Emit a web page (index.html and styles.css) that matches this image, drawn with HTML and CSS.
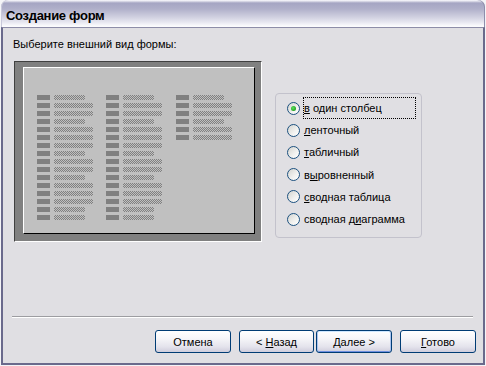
FILE: index.html
```html
<!DOCTYPE html>
<html lang="ru">
<head>
    <meta charset="UTF-8">
    <title>Создание форм</title>
    <link rel="stylesheet" href="styles.css">
</head>
<body>
    <div class="window">
        <div class="titlebar">Создание форм</div>
        <div class="client">
            <div class="prompt">Выберите внешний вид формы:</div>

            <div class="main">
                <div class="preview">
                    <div class="sheet">
                        <div class="col">
                            <div class="ln"><i></i><b class="s"></b></div>
                            <div class="ln"><i></i><b></b></div>
                            <div class="ln"><i></i><b></b></div>
                            <div class="ln"><i></i><b class="s"></b></div>
                            <div class="ln"><i></i><b></b></div>
                            <div class="ln"><i></i><b></b></div>
                            <div class="ln"><i></i><b></b></div>
                            <div class="ln"><i></i><b class="s"></b></div>
                            <div class="ln"><i></i><b></b></div>
                            <div class="ln"><i></i><b></b></div>
                            <div class="ln"><i></i><b class="s"></b></div>
                            <div class="ln"><i></i><b></b></div>
                            <div class="ln"><i></i><b></b></div>
                            <div class="ln"><i></i><b></b></div>
                            <div class="ln"><i></i><b class="s"></b></div>
                            <div class="ln"><i></i><b class="s"></b></div>
                        </div>
                        <div class="col">
                            <div class="ln"><i></i><b class="s"></b></div>
                            <div class="ln"><i></i><b></b></div>
                            <div class="ln"><i></i><b></b></div>
                            <div class="ln"><i></i><b class="s"></b></div>
                            <div class="ln"><i></i><b></b></div>
                            <div class="ln"><i></i><b></b></div>
                            <div class="ln"><i></i><b></b></div>
                            <div class="ln"><i></i><b class="s"></b></div>
                            <div class="ln"><i></i><b></b></div>
                            <div class="ln"><i></i><b></b></div>
                            <div class="ln"><i></i><b class="s"></b></div>
                            <div class="ln"><i></i><b></b></div>
                            <div class="ln"><i></i><b></b></div>
                            <div class="ln"><i></i><b></b></div>
                            <div class="ln"><i></i><b class="s"></b></div>
                            <div class="ln"><i></i><b class="s"></b></div>
                        </div>
                        <div class="col">
                            <div class="ln"><i></i><b class="s"></b></div>
                            <div class="ln"><i></i><b></b></div>
                            <div class="ln"><i></i><b></b></div>
                            <div class="ln"><i></i><b class="s"></b></div>
                            <div class="ln"><i></i><b></b></div>
                            <div class="ln"><i></i><b></b></div>
                        </div>
                    </div>
                </div>

                <div class="group">
                    <label class="opt">
                        <span class="radio checked"></span>
                        <span class="text focus"><u>в</u> один столбец</span>
                    </label>
                    <label class="opt">
                        <span class="radio"></span>
                        <span class="text"><u>л</u>енточный</span>
                    </label>
                    <label class="opt">
                        <span class="radio"></span>
                        <span class="text"><u>т</u>абличный</span>
                    </label>
                    <label class="opt">
                        <span class="radio"></span>
                        <span class="text">в<u>ы</u>ровненный</span>
                    </label>
                    <label class="opt">
                        <span class="radio"></span>
                        <span class="text"><u>с</u>водная таблица</span>
                    </label>
                    <label class="opt">
                        <span class="radio"></span>
                        <span class="text">сводная д<u>и</u>аграмма</span>
                    </label>
                </div>
            </div>

            <div class="sep"></div>

            <div class="buttons">
                <button class="btn">Отмена</button>
                <button class="btn back">&lt; <u>Н</u>азад</button>
                <button class="btn next default"><u>Д</u>алее &gt;</button>
                <button class="btn finish"><u>Г</u>отово</button>
            </div>
        </div>
    </div>
</body>
</html>
```

FILE: styles.css
```css
body {
    margin: 0;
    background: #f4f4f7;
    font-family: "Liberation Sans", Arial, sans-serif;
    font-size: 11px;
    color: #000;
}
.window {
    width: 484px;
    margin-left: 1px;
}
.titlebar {
    height: 22px;
    padding: 5px 0 0 5px;
    line-height: 22px;
    font-size: 13px;
    font-weight: bold;
    letter-spacing: -0.3px;
    border-radius: 7px 7px 0 0;
    box-shadow: inset 1px 0 #c8c8da, inset -1px 0 #8e8eac;
    background: linear-gradient(to bottom, #fbfbff 0, #e4e4ee 1px, #a5a5c3 3px, #b0b0ca 9px, #d0d0e0 17px, #ebebf3 23px, #fbfbfd 26px);
}
.client {
    height: 335px;
    background: #e0dfe3;
    border: 2px solid #6a6a8c;
    border-top: 1px solid #8d8da8;
}
.prompt {
    margin: 10px 0 0 10px;
    line-height: 13px;
}
.main {
    display: flex;
    align-items: flex-start;
    margin-top: 10px;
}
.preview {
    display: flex;
    box-sizing: border-box;
    width: 248px;
    height: 181px;
    margin-left: 11px;
    padding: 5px 6px 7px 8px;
    background: #808080;
    border: 1px solid;
    border-color: #404040 #fff #fff #404040;
}
.sheet {
    flex: 1;
    display: grid;
    grid-template-columns: 69px 70px 1fr;
    align-items: start;
    padding: 27px 0 0 13px;
    background: #c0c0c0;
    border: 1px solid;
    border-color: #fff #000 #000 #fff;
}
.col {
    display: flex;
    flex-direction: column;
    gap: 3px;
}
.ln {
    display: flex;
    gap: 4px;
    height: 5px;
}
.ln i {
    width: 13px;
    background: #808080;
}
.ln b {
    width: 39px;
    background: repeating-conic-gradient(#808080 0 25%, #c0c0c0 0 50%) 0 0 / 2px 2px;
}
.ln b.s {
    width: 31px;
}
.group {
    box-sizing: border-box;
    width: 147px;
    height: 145px;
    margin: 32px 0 0 13px;
    padding: 3px 0 0 11px;
    border: 1px solid #c3c2cc;
    border-radius: 4px;
}
.opt {
    display: flex;
    align-items: center;
    height: 22.2px;
}
.radio {
    box-sizing: border-box;
    width: 13px;
    height: 13px;
    border: 1px solid #1c5180;
    border-radius: 50%;
    background: linear-gradient(135deg, #d4d4d0 0%, #f2f2f0 60%, #fff 100%);
    position: relative;
}
.radio.checked::after {
    content: "";
    position: absolute;
    left: 3px;
    top: 3px;
    width: 5px;
    height: 5px;
    border-radius: 50%;
    background: radial-gradient(circle at 40% 40%, #5ee35e 0, #21a121 70%, #1a8a1a 100%);
}
.text {
    box-sizing: border-box;
    width: 113px;
    height: 22px;
    line-height: 20px;
    margin-left: 3px;
    border: 1px dotted transparent;
    white-space: nowrap;
}
.text.focus {
    border-color: #000;
}
.sep {
    margin: 74px 10px 0 9px;
    border-top: 1px solid #9d9da1;
    border-bottom: 1px solid #fff;
}
.buttons {
    display: flex;
    justify-content: flex-end;
    margin-top: 12px;
    padding-right: 7px;
}
.btn {
    box-sizing: border-box;
    width: 76px;
    height: 23px;
    padding: 0;
    font-family: "Liberation Sans", Arial, sans-serif;
    font-size: 11px;
    color: #000;
    border: 1px solid #003c74;
    border-radius: 3px;
    background: linear-gradient(to bottom, #fff 0%, #f6f6f9 35%, #e4e3ec 75%, #cfcddc 100%);
}
.btn.back {
    width: 75px;
    margin-left: 8px;
}
.btn.next {
    margin-left: 2px;
}
.btn.finish {
    margin-left: 8px;
}
.btn.default {
    box-shadow: inset 0 1px #cee7ff, inset 1px 0 #a9c3ee, inset -1px 0 #a9c3ee, inset 0 -1px #6f8fe0;
}
```
